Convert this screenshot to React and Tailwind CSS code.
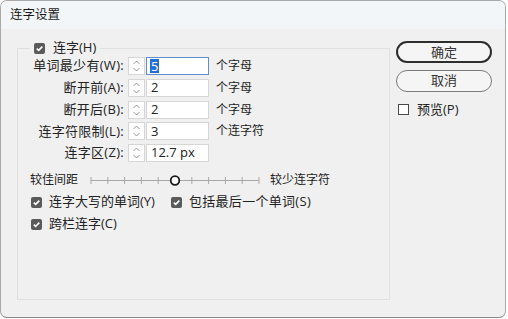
import React from 'react';

const font = { fontFamily: '"Open Sans", "Noto Sans CJK SC", sans-serif' };

const Check = ({ checked = true }) => (
    checked ? (
        <span className="w-[11px] h-[11px] rounded-[2px] bg-[#5a5a5a] flex items-center justify-center shrink-0">
            <svg width="9" height="9" viewBox="0 0 9 9">
                <path d="M1.8 4.6 L3.7 6.4 L7.3 2.6" fill="none" stroke="#fff" strokeWidth="1.6" />
            </svg>
        </span>
    ) : (
        <span className="w-[11px] h-[11px] border border-[#4a4a4a] bg-white shrink-0" />
    )
);

const Spin = () => (
    <span className="w-[17px] h-[18px] border border-[#d6d6d6] bg-white flex items-center justify-center shrink-0">
        <svg width="9" height="14" viewBox="0 0 9 14">
            <path d="M1.5 5 L4.5 2 L7.5 5" fill="none" stroke="#9a9a9a" strokeWidth="1" />
            <path d="M1.5 9 L4.5 12 L7.5 9" fill="none" stroke="#9a9a9a" strokeWidth="1" />
        </svg>
    </span>
);

const Row = ({ label, value, unit, focus }) => (
    <div className="flex items-center h-[18px]">
        <span className="w-[106px] text-right whitespace-nowrap text-[13px] tracking-[0.3px]">{label}</span>
        <span className="ml-[4px] flex items-center gap-[1px]">
            <Spin />
            <span className={`w-[63px] h-[18px] bg-white flex items-center pl-[3px] text-[13px] ${focus ? 'border border-[#5d8fd0]' : 'border border-[#d6d6d6]'}`}>
                {focus ? <span className="bg-[#1f6fd6] text-white px-[1px] leading-[14px]">{value}</span> : <span className="pl-[1px]">{value}</span>}
            </span>
        </span>
        {unit && <span className="ml-[7px]">{unit}</span>}
    </div>
);

const Slider = () => {
    const ticks = [];
    for (let i = 0; i < 11; i++) {
        if (i === 5) continue;
        const x = 1 + i * 16.8;
        ticks.push(<line key={i} x1={x} y1="3" x2={x} y2="10" stroke="#a8a8a8" strokeWidth="1" />);
    }
    return (
        <svg width="172" height="13" viewBox="0 0 172 13">
            <line x1="1" y1="6.5" x2="169" y2="6.5" stroke="#a8a8a8" strokeWidth="1" />
            {ticks}
            <circle cx={1 + 5 * 16.8} cy="6.5" r="4.3" fill="#fff" stroke="#1a1a1a" strokeWidth="1.8" />
        </svg>
    );
};

export default function App() {
    return (
        <div className="w-[508px] h-[319px] bg-white text-[12px] text-[#222]" style={font}>
            <div className="w-[506px] h-[318px] rounded-[7px] border border-[#a9a9a9] border-b-[#8a8a8a] bg-[#f0f0f0] overflow-hidden flex flex-col">
                <div className="h-[28px] bg-[#f3f6f9] flex items-center pl-[9px] text-[12.5px] text-[#1a1a1a] shrink-0">连字设置</div>
                <div className="flex flex-1">
                    <div className="relative ml-[16px] mt-[19px] w-[373px] h-[252px] border border-[#e0e0e0]">
                        <div className="absolute left-[12px] -top-[9px] flex items-center gap-[8px] bg-[#f0f0f0] px-[4px] h-[16px] text-[13px]">
                            <Check />
                            <span>连字(H)</span>
                        </div>
                        <div className="flex flex-col gap-[3.75px] mt-[8px]">
                            <Row label="单词最少有(W):" value="5" unit="个字母" focus />
                            <Row label="断开前(A):" value="2" unit="个字母" />
                            <Row label="断开后(B):" value="2" unit="个字母" />
                            <Row label="连字符限制(L):" value="3" unit="个连字符" />
                            <Row label="连字区(Z):" value="12.7 px" />
                        </div>
                        <div className="flex items-center ml-[12px] mt-[10px] h-[16px]">
                            <span className="w-[60px]">较佳间距</span>
                            <Slider />
                            <span className="ml-[8px]">较少连字符</span>
                        </div>
                        <div className="flex items-center ml-[13px] mt-[6px] h-[16px] text-[13px]">
                            <Check />
                            <span className="ml-[7px]">连字大写的单词(Y)</span>
                            <span className="ml-[16px]"><Check /></span>
                            <span className="ml-[7px] tracking-[0.3px]">包括最后一个单词(S)</span>
                        </div>
                        <div className="flex items-center ml-[13px] mt-[6px] h-[16px] text-[13px]">
                            <Check />
                            <span className="ml-[7px]">跨栏连字(C)</span>
                        </div>
                    </div>
                    <div className="ml-[6px] mt-[12px] flex flex-col w-[96px]">
                        <button className="h-[22px] rounded-full border-2 border-[#2e2e2e] bg-[#f5f5f5] text-[13px] text-[#333]">确定</button>
                        <button className="mt-[7px] h-[22px] rounded-full border border-[#7a7a7a] bg-[#f5f5f5] text-[13px] text-[#333]">取消</button>
                        <div className="mt-[8px] ml-[2px] flex items-center gap-[8px] text-[13px]">
                            <Check checked={false} />
                            <span>预览(P)</span>
                        </div>
                    </div>
                </div>
            </div>
        </div>
    );
}
